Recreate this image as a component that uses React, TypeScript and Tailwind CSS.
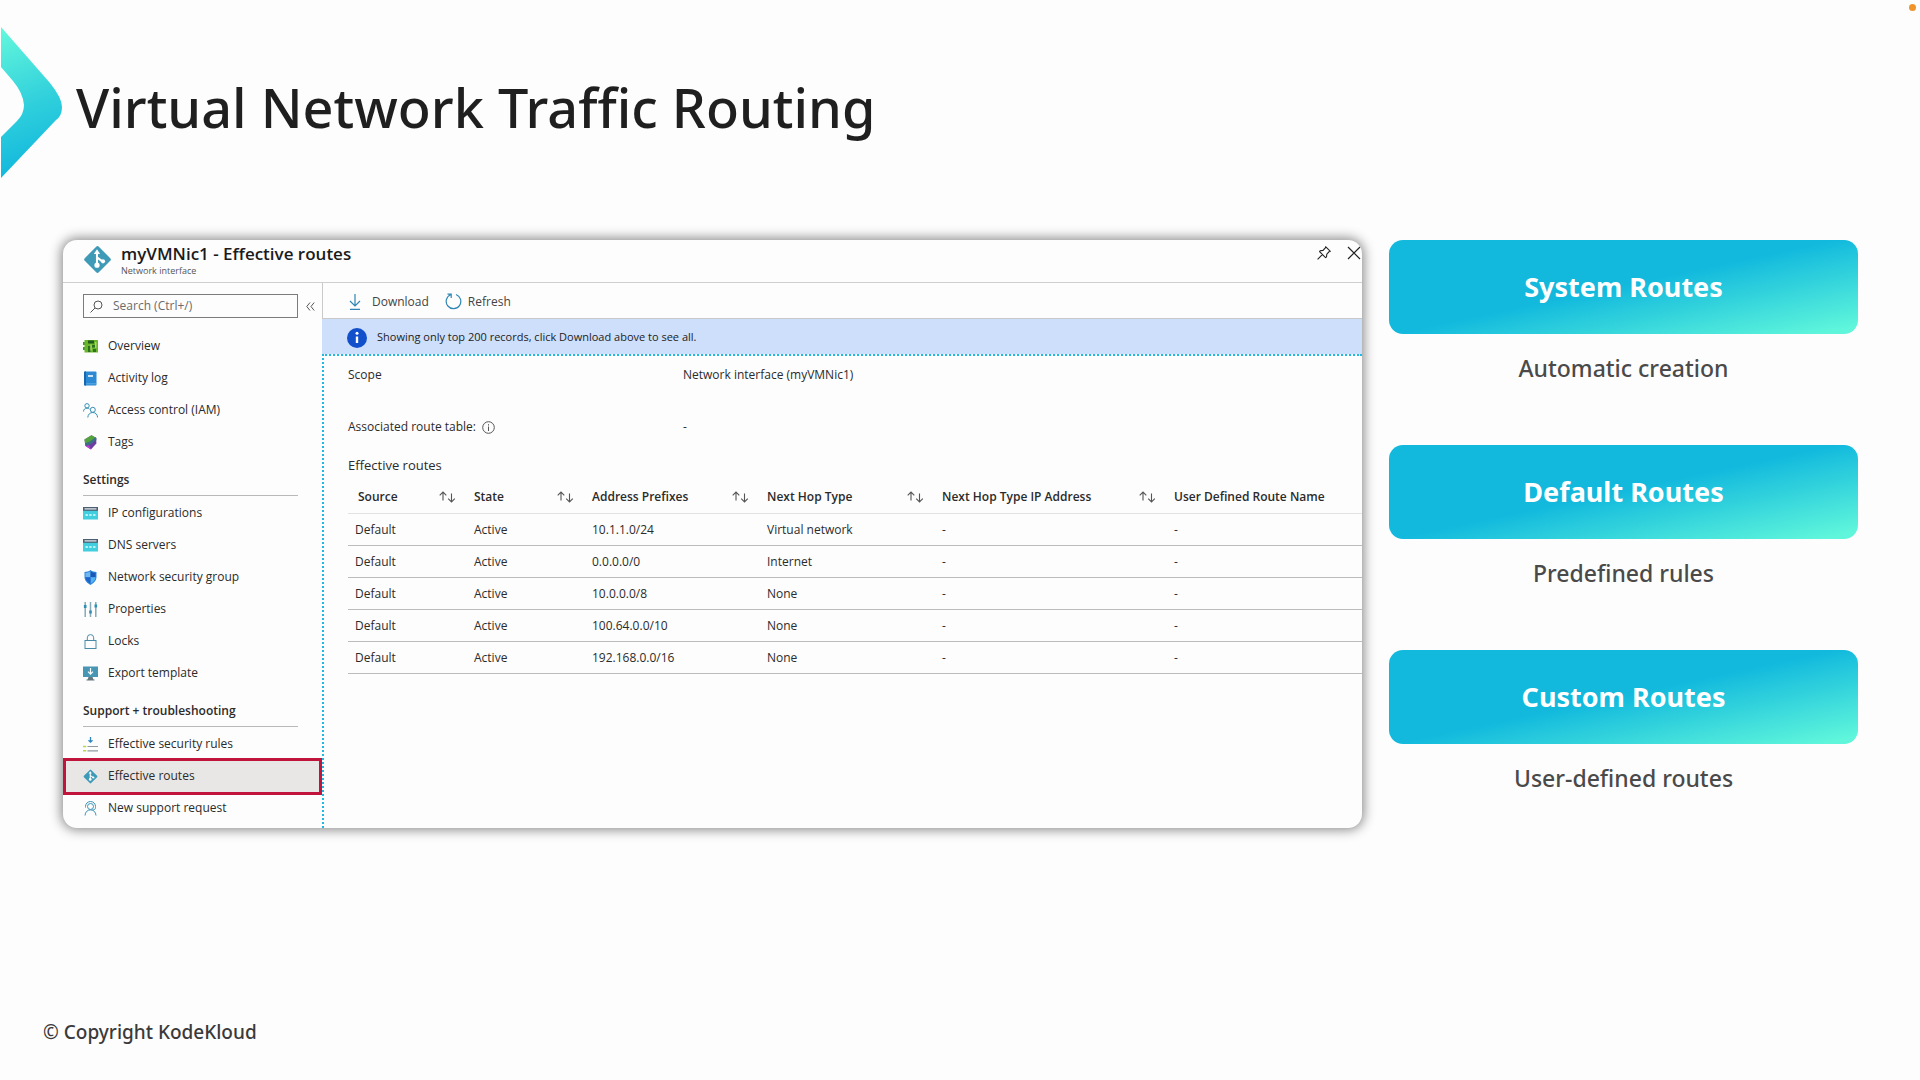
import React from "react";

type IconProps = { className?: string };

function RouteDiamond({ className }: IconProps) {
  return (
    <svg viewBox="0 0 28 28" className={className} aria-hidden="true">
      <rect x="4.4" y="4.4" width="19.2" height="19.2" rx="1.8" fill="#3f9ab8" transform="rotate(45 14 14)" />
      <path d="M13.500 7v12M13.500 12l5.500 4" stroke="#fff" strokeWidth="2" fill="none" />
      <path d="M13.500 4l3 4.600h-6z" fill="#fff" />
      <circle cx="13.500" cy="19.500" r="2.500" fill="#fff" />
      <circle cx="19.300" cy="15.800" r="2" fill="#fff" />
    </svg>
  );
}

function OverviewIcon() {
  return (
    <svg viewBox="0 0 15 15" className="size-[15px]" aria-hidden="true">
      <path d="M0 3h2v3H0zM0 8h2v3H0z" fill="#3f8f3b" />
      <rect x="1.5" y="1" width="13.5" height="12.5" rx="0.6" fill="#6bb52b" />
      <path d="M5 1.5h6v3H5z" fill="#1f5a1e" />
      <path d="M5 7h2.5v6H5zM9 6h3v2.500H9zM10 10h3v3h-3z" fill="#2c7022" />
      <path d="M8 5.500v6M12.800 3v6" stroke="#c3e87f" strokeWidth="1" />
    </svg>
  );
}

function LogIcon() {
  return (
    <svg viewBox="0 0 15 15" className="size-[15px]" aria-hidden="true">
      <rect x="1" y="0.5" width="12.500" height="14" rx="1" fill="#2b8ad3" />
      <path d="M1 1.500a1 1 0 0 1 1-1h1v14H2a1 1 0 0 1-1-1z" fill="#1767b0" />
      <path d="M5 5h5" stroke="#fff" strokeWidth="1.500" />
      <path d="M3 12.800h10.500" stroke="#69b4ea" strokeWidth="0.800" />
    </svg>
  );
}

function AccessIcon() {
  return (
    <svg viewBox="0 0 15 15" className="size-[15px]" fill="none" stroke="#3590b5" strokeWidth="1" aria-hidden="true">
      <circle cx="4" cy="2.800" r="2.200" />
      <path d="M0.500 8.500c0-2 1.500-3.400 3.500-3.400 1 0 1.800.3 2.400.9" />
      <circle cx="9.800" cy="6.800" r="2.500" />
      <path d="M4.800 14.500c.2-3 2-5 5-5s4.600 2 4.800 5" />
    </svg>
  );
}

function TagsIcon() {
  return (
    <svg viewBox="0 0 15 15" className="size-[15px]" aria-hidden="true">
      <path d="M1.500 4.500 8.500.3l4.800 2.700v5.500L8 14.500 2.500 11z" fill="#6b3fa0" />
      <path d="M1.500 4.500 8.500.3l4 2.200-4 4.200L2 8.500z" fill="#54a43c" />
      <path d="M2 8.300 6 7l6.500-4.700.8.700v2L7 9.800l-4.700 1z" fill="#3d6f86" />
      <path d="M8 14.500 2.500 11l3.500-.8z" fill="#c03fd0" />
    </svg>
  );
}

function WindowIcon() {
  return (
    <svg viewBox="0 0 15 15" className="size-[15px]" aria-hidden="true">
      <rect x="0" y="1.500" width="15" height="12" fill="#41cfdf" />
      <rect x="0" y="1" width="15" height="3.800" fill="#4c5f70" />
      <path d="M1.500 2.900h12" stroke="#e8eef2" strokeWidth="1.200" />
      <path d="M2.500 9h2.400M6.300 9h2.400M10.100 9h2.400" stroke="#e7fbfd" strokeWidth="1.600" />
    </svg>
  );
}

function ShieldIcon() {
  return (
    <svg viewBox="0 0 15 15" className="size-[15px]" aria-hidden="true">
      <path d="M7.500 0c1.800 1.400 3.800 1.900 6 1.900V7c0 3.700-3 6.300-6 8-3-1.700-6-4.300-6-8V1.900c2.200 0 4.200-.5 6-1.900z" fill="#2f86dc" />
      <path d="M7.500 1.200V7.300H2.500V2.900c1.900-.1 3.500-.7 5-1.700z" fill="#6fb9f2" />
      <path d="M7.500 1.200V7.300h5V2.900c-1.900-.1-3.500-.7-5-1.700z" fill="#1858b8" />
      <path d="M7.500 7.300h5c-.2 2.900-2.500 4.900-5 6.500z" fill="#52b3f2" />
      <path d="M2.500 7.300h5v6.500c-2.600-1.600-4.800-3.600-5-6.500z" fill="#1f62c8" />
    </svg>
  );
}

function PropertiesIcon() {
  return (
    <svg viewBox="0 0 15 15" className="size-[15px]" aria-hidden="true">
      <path d="M2.200 0v15M7.500 0v15M12.800 0v15" stroke="#86aab8" strokeWidth="1.500" />
      <path d="M.9 4.500h2.600M6.200 10h2.600M11.500 4h2.600" stroke="#2f8fb2" strokeWidth="3" />
    </svg>
  );
}

function LockIcon() {
  return (
    <svg viewBox="0 0 15 15" className="size-[15px]" fill="none" stroke="#4a8ba5" strokeWidth="1" aria-hidden="true">
      <rect x="2" y="6.500" width="11" height="8" />
      <path d="M4.300 6.500V3.800a3.200 3.200 0 0 1 6.400 0v2.700" />
    </svg>
  );
}

function ExportIcon() {
  return (
    <svg viewBox="0 0 15 15" className="size-[15px]" aria-hidden="true">
      <rect x="0" y="0.500" width="15" height="10.500" fill="#4796b4" />
      <path d="M5.500 11h4l1 2.500h1v1h-8v-1h1z" fill="#66787f" />
      <path d="M7.500 2v6M5 5.700 7.500 8.200 10 5.700" stroke="#fff" strokeWidth="1.200" fill="none" />
    </svg>
  );
}

function RulesIcon() {
  return (
    <svg viewBox="0 0 15 15" className="size-[15px]" fill="none" aria-hidden="true">
      <path d="M7.500 0v5M5.500 3.200l2 2 2-2" stroke="#2f86c0" strokeWidth="1.300" />
      <path d="M4.500 9.500H15M4.500 13.800H15" stroke="#8f9ba1" strokeWidth="1.200" />
      <path d="M0 9.500h3.200M0 13.800h3.200" stroke="#b7d84b" strokeWidth="1.500" />
    </svg>
  );
}

function SupportIcon() {
  return (
    <svg viewBox="0 0 15 15" className="size-[15px]" fill="none" stroke="#3b93b4" strokeWidth="1" aria-hidden="true">
      <circle cx="7.500" cy="5.500" r="3" />
      <path d="M2.500 6.500v-1a5 5 0 0 1 10 0v1c0 1.500-1 2.500-3 2.500" />
      <path d="M2 14.500c.3-3.500 2.300-5.600 5.500-5.600s5.200 2.100 5.500 5.600" />
    </svg>
  );
}

function SortIcon() {
  return (
    <svg viewBox="0 0 17 12" className="h-3 w-[17px] shrink-0" fill="none" stroke="#555" strokeWidth="1.100" aria-hidden="true">
      <path d="M4 9.500V1M.7 4.300 4 1l3.300 3.300" />
      <path d="M12.500 2.500V11M9.200 7.700l3.300 3.300 3.300-3.300" />
    </svg>
  );
}

type Item = { label: string; icon: React.ReactNode; active?: boolean };

const general: Item[] = [
  { label: "Overview", icon: <OverviewIcon /> },
  { label: "Activity log", icon: <LogIcon /> },
  { label: "Access control (IAM)", icon: <AccessIcon /> },
  { label: "Tags", icon: <TagsIcon /> },
];

const settings: Item[] = [
  { label: "IP configurations", icon: <WindowIcon /> },
  { label: "DNS servers", icon: <WindowIcon /> },
  { label: "Network security group", icon: <ShieldIcon /> },
  { label: "Properties", icon: <PropertiesIcon /> },
  { label: "Locks", icon: <LockIcon /> },
  { label: "Export template", icon: <ExportIcon /> },
];

const support: Item[] = [
  { label: "Effective security rules", icon: <RulesIcon /> },
  { label: "Effective routes", icon: <RouteDiamond className="size-[15px]" />, active: true },
  { label: "New support request", icon: <SupportIcon /> },
];

function NavList({ items }: { items: Item[] }) {
  return (
    <ul>
      {items.map((item) => (
        <li key={item.label} className="flex h-8 items-center">
          <a
            href="#"
            aria-current={item.active ? "page" : undefined}
            className={
              item.active
                ? "flex h-[37px] w-full shrink-0 items-center gap-[10px] border-[3px] border-[#c0143c] bg-[#e9e7e6] pl-[17px]"
                : "flex h-8 w-full items-center gap-[10px] pl-5"
            }
          >
            {item.icon}
            {item.label}
          </a>
        </li>
      ))}
    </ul>
  );
}

function NavHeading({ children }: { children: React.ReactNode }) {
  return <h3 className="ml-5 mr-6 border-b border-[#b9b9b9] pb-1.5 font-semibold leading-[18px]">{children}</h3>;
}

const columns = [
  { label: "Source", width: "w-[126px]", sort: true },
  { label: "State", width: "w-[118px]", sort: true },
  { label: "Address Prefixes", width: "w-[175px]", sort: true },
  { label: "Next Hop Type", width: "w-[175px]", sort: true },
  { label: "Next Hop Type IP Address", width: "w-[232px]", sort: true },
  { label: "User Defined Route Name", width: "", sort: false },
];

const rows = [
  ["Default", "Active", "10.1.1.0/24", "Virtual network", "-", "-"],
  ["Default", "Active", "0.0.0.0/0", "Internet", "-", "-"],
  ["Default", "Active", "10.0.0.0/8", "None", "-", "-"],
  ["Default", "Active", "100.64.0.0/10", "None", "-", "-"],
  ["Default", "Active", "192.168.0.0/16", "None", "-", "-"],
];

const cards = [
  { title: "System Routes", text: "Automatic creation" },
  { title: "Default Routes", text: "Predefined rules" },
  { title: "Custom Routes", text: "User-defined routes" },
];

function Sidebar() {
  return (
    <nav aria-label="Resource menu" className="w-[259px] shrink-0 pb-1 pt-[11px]">
      <div className="flex items-center gap-2 pl-5">
        <label className="flex h-6 w-[215px] items-center gap-[10px] border border-[#7b7b7b] pl-[6px]">
          <svg viewBox="0 0 13 13" className="size-[13px] shrink-0" fill="none" stroke="#555" strokeWidth="1" aria-hidden="true">
            <circle cx="8" cy="5" r="4" />
            <path d="M5 8 .5 12.500" />
          </svg>
          <input
            type="text"
            aria-label="Search"
            placeholder="Search (Ctrl+/)"
            className="min-w-0 flex-1 bg-transparent outline-none placeholder:text-[#6b6b6b]"
          />
        </label>
        <button type="button" aria-label="Collapse menu">
          <svg viewBox="0 0 9 9" className="size-[9px]" fill="none" stroke="#555" strokeWidth="1" aria-hidden="true">
            <path d="M4 .5.800 4.500 4 8.500M8.200.5 5 4.500l3.200 4" />
          </svg>
        </button>
      </div>
      <div className="mt-3">
        <NavList items={general} />
      </div>
      <div className="mt-[13px]">
        <NavHeading>Settings</NavHeading>
        <div className="mt-px">
          <NavList items={settings} />
        </div>
      </div>
      <div className="mt-[13px]">
        <NavHeading>Support + troubleshooting</NavHeading>
        <div className="mt-px">
          <NavList items={support} />
        </div>
      </div>
    </nav>
  );
}

function Details() {
  return (
    <div className="flex min-w-0 flex-1 flex-col">
      <div className="flex h-9 items-center gap-4 border-b border-l border-[#c9c9c9] pl-[25px] pt-0.5 text-[#444]">
        <button type="button" className="flex items-center gap-[10px]">
          <svg viewBox="0 0 14 16" className="h-4 w-[14px]" fill="none" stroke="#2f86b5" strokeWidth="1.200" aria-hidden="true">
            <path d="M7 0v11.500M2 7l5 5 5-5M2 15.300h10" />
          </svg>
          Download
        </button>
        <button type="button" className="flex items-center gap-1.5">
          <svg viewBox="0 0 17 17" className="size-[17px]" fill="none" stroke="#2f86b5" strokeWidth="1.200" aria-hidden="true">
            <path d="M11 1.500a7.300 7.300 0 1 1-5.500.2M2.500 1.200h3.700v3.700" />
          </svg>
          Refresh
        </button>
      </div>
      <div role="status" className="flex h-[35px] items-center gap-[10px] bg-[#cddffb] pl-[25px] pt-0.5 text-[11px] text-[#222]">
        <svg viewBox="0 0 20 20" className="size-5" aria-hidden="true">
          <circle cx="10" cy="10" r="10" fill="#114fcb" />
          <path d="M10 8.500v6.500" stroke="#fff" strokeWidth="2.400" />
          <circle cx="10" cy="5.300" r="1.500" fill="#fff" />
        </svg>
        Showing only top 200 records, click Download above to see all.
      </div>
      <div className="flex-1 border-l-2 border-t-2 border-dotted border-[#1fb9e2] pl-6 pt-[10px]">
        <dl className="grid grid-cols-[335px_1fr] gap-y-[34px] leading-[18px]">
          <dt>Scope</dt>
          <dd>Network interface (myVMNic1)</dd>
          <dt className="flex items-center gap-1.5">
            Associated route table:
            <svg viewBox="0 0 13 13" className="size-[13px]" fill="none" stroke="#555" strokeWidth="1" aria-hidden="true">
              <circle cx="6.500" cy="6.500" r="5.800" />
              <path d="M6.500 5.500V10M6.500 3.200v1.300" />
            </svg>
          </dt>
          <dd>-</dd>
        </dl>
        <h3 className="mt-5 text-[13px] leading-[18px]">Effective routes</h3>
        <table className="mt-[7px] w-full table-fixed text-left">
          <thead>
            <tr className="h-8 border-b border-[#e2e2e2]">
              {columns.map((c, i) => (
                <th key={c.label} scope="col" className={`${c.width} whitespace-nowrap p-0 font-semibold`}>
                  <div className={`flex items-center justify-between pr-[18px] ${i === 0 ? "pl-[10px]" : ""}`}>
                    {c.label}
                    {c.sort && (
                      <button type="button" aria-label={`Sort by ${c.label}`}>
                        <SortIcon />
                      </button>
                    )}
                  </div>
                </th>
              ))}
            </tr>
          </thead>
          <tbody>
            {rows.map((row) => (
              <tr key={row[2]} className="h-8 border-b border-[#bcbcbc]">
                {row.map((cell, i) => (
                  <td key={i} className={i === 0 ? "p-0 pl-[7px] pt-0.5" : "p-0 pt-0.5"}>
                    {cell}
                  </td>
                ))}
              </tr>
            ))}
          </tbody>
        </table>
      </div>
    </div>
  );
}

function PortalWindow() {
  return (
    <section className="flex min-w-0 flex-1 flex-col overflow-hidden rounded-[14px] bg-[#fdfdfd] font-['Open_Sans','Noto_Sans',sans-serif] text-xs text-[#2b2b2b] shadow-[0_0_12px_2px_rgba(0,0,0,0.45)]">
      <div className="flex h-[43px] items-start justify-between border-b border-[#cfcfcf] pr-px">
        <div className="flex gap-[9px] pl-5 pt-[5px]">
          <RouteDiamond className="size-[29px]" />
          <div>
            <h2 className="text-[17px] font-semibold leading-[18px] text-[#1b1b1b]">myVMNic1 - Effective routes</h2>
            <p className="text-[9px] leading-4 text-[#555]">Network interface</p>
          </div>
        </div>
        <div className="flex items-center gap-4 pt-[6px]">
          <button type="button" aria-label="Pin">
            <svg viewBox="0 0 14 14" className="size-[14px]" fill="none" stroke="#222" strokeWidth="1.100" aria-hidden="true">
              <path d="M8.800.8l4.400 4.400-1.200.6-2.200 2.400-.3 2.800-1 .6L2.600 5.700l.6-1 2.800-.3L8.300 2zM5.300 8.700.6 13.400" />
            </svg>
          </button>
          <button type="button" aria-label="Close">
            <svg viewBox="0 0 14 14" className="size-[14px]" stroke="#222" strokeWidth="1.200" aria-hidden="true">
              <path d="M1 1l12 12M13 1 1 13" />
            </svg>
          </button>
        </div>
      </div>
      <div className="flex flex-1">
        <Sidebar />
        <Details />
      </div>
    </section>
  );
}

export default function App() {
  return (
    <div className="relative flex min-h-screen flex-col bg-[#fdfdfd] font-['Noto_Sans','Open_Sans',sans-serif]">
      <span className="absolute right-1 top-1 size-[7px] rounded-full bg-[#f0932b]" />
      <header className="flex items-center gap-[14px] pt-[27px]">
        <svg viewBox="0 0 62 152" className="h-[152px] w-[62px] shrink-0" aria-hidden="true">
          <defs>
            <linearGradient id="chevron" x1="0.2" y1="0" x2="0.350" y2="1">
              <stop offset="0" stopColor="#62f6dc" />
              <stop offset="0.550" stopColor="#2fcfdc" />
              <stop offset="1" stopColor="#10b6dd" />
            </linearGradient>
          </defs>
          <path d="M1 0 50 56Q62 71 62 80T56 93L1 151V110L17 94Q24 87 24 78 23 66 13 54L1 40Z" fill="url(#chevron)" />
        </svg>
        <h1 className="pt-2 text-[54px] font-medium leading-[64px] text-[#1f1f1f]">Virtual Network Traffic Routing</h1>
      </header>
      <main className="mt-[61px] flex items-start gap-[27px] pl-[63px] pr-[62px]">
        <PortalWindow />
        <aside className="flex w-[469px] shrink-0 flex-col gap-[61px]">
          {cards.map((c) => (
            <div key={c.title} className="flex flex-col gap-[18px] text-center">
              <h2 className="rounded-[14px] bg-[linear-gradient(168deg,#12b9dd_49%,#5ff6db_96%)] py-[31px] text-[27px] font-bold leading-8 text-white">
                {c.title}
              </h2>
              <p className="text-[23px] font-medium leading-8 text-[#4a4a4a]">{c.text}</p>
            </div>
          ))}
        </aside>
      </main>
      <footer className="mt-auto pb-[34px] pl-[43px] text-[19px] font-medium leading-7 text-[#3a3a3a]">© Copyright KodeKloud</footer>
    </div>
  );
}
